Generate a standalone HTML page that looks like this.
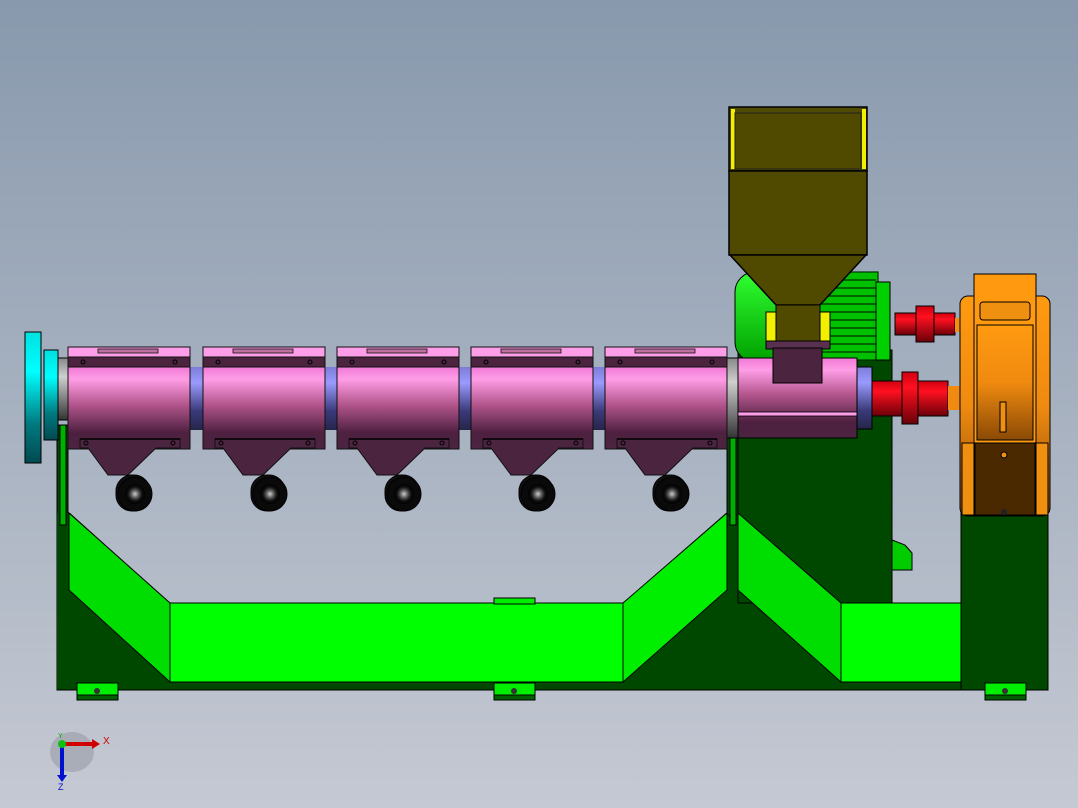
<!DOCTYPE html>
<html><head><meta charset="utf-8"><style>
html,body{margin:0;padding:0;width:1078px;height:808px;overflow:hidden}
svg{display:block}
</style></head><body>
<svg width="1078" height="808" viewBox="0 0 1078 808" xmlns="http://www.w3.org/2000/svg">
<defs>
<linearGradient id="bg" gradientUnits="userSpaceOnUse" x1="0" y1="0" x2="0" y2="808"><stop offset="0" stop-color="#8899ad"/><stop offset="1" stop-color="#c5c9d3"/></linearGradient>
<linearGradient id="pink" x1="0" y1="0" x2="0" y2="1"><stop offset="0" stop-color="#f07ad6"/><stop offset="0.15" stop-color="#ff9de6"/><stop offset="0.45" stop-color="#b5578f"/><stop offset="0.8" stop-color="#4e2040"/><stop offset="1" stop-color="#4b2440"/></linearGradient>
<linearGradient id="blue" x1="0" y1="0" x2="0" y2="1"><stop offset="0" stop-color="#7d7dd8"/><stop offset="0.25" stop-color="#9a9aff"/><stop offset="0.7" stop-color="#3a3a7a"/><stop offset="1" stop-color="#25254a"/></linearGradient>
<linearGradient id="cyan" x1="0" y1="0" x2="0" y2="1"><stop offset="0" stop-color="#00e0e0"/><stop offset="0.3" stop-color="#00ffff"/><stop offset="0.7" stop-color="#007a80"/><stop offset="1" stop-color="#004a50"/></linearGradient>
<linearGradient id="gray" x1="0" y1="0" x2="0" y2="1"><stop offset="0" stop-color="#888"/><stop offset="0.3" stop-color="#cfcfcf"/><stop offset="1" stop-color="#333"/></linearGradient>
<linearGradient id="red" x1="0" y1="0" x2="0" y2="1"><stop offset="0" stop-color="#d00010"/><stop offset="0.3" stop-color="#ff1020"/><stop offset="1" stop-color="#6a0008"/></linearGradient>
<linearGradient id="orange" x1="0" y1="0" x2="0" y2="1"><stop offset="0" stop-color="#ff9a10"/><stop offset="0.5" stop-color="#f08a10"/><stop offset="1" stop-color="#8a4a05"/></linearGradient>
<linearGradient id="mgreen" x1="0" y1="0" x2="0" y2="1"><stop offset="0" stop-color="#30ff30"/><stop offset="1" stop-color="#00a000"/></linearGradient>
<radialGradient id="fan" cx="0.5" cy="0.5" r="0.5"><stop offset="0" stop-color="#ccc"/><stop offset="0.4" stop-color="#555"/><stop offset="0.7" stop-color="#111"/><stop offset="1" stop-color="#000"/></radialGradient>
<g id="band">
 <rect x="0" y="0" width="122" height="10" fill="#ff9ee8" stroke="#111"/>
 <rect x="30" y="2" width="60" height="4" fill="#c070a0" stroke="#111" stroke-width="0.8"/>
 <rect x="0" y="10" width="122" height="10" fill="#4c2440" stroke="#111"/>
 <circle cx="15" cy="15" r="2" fill="none" stroke="#000"/><circle cx="107" cy="15" r="2" fill="none" stroke="#000"/>
 <rect x="0" y="20" width="122" height="82" fill="url(#pink)" stroke="#111"/>
 <polygon points="12,92 112,92 112,101 88,101 60,128 40,128 20,101 12,101" fill="#4b2440" stroke="#111"/>
 <line x1="12" y1="92" x2="112" y2="92" stroke="#000" stroke-width="1.5"/>
 <circle cx="18" cy="96" r="2" fill="none" stroke="#000"/><circle cx="105" cy="96" r="2" fill="none" stroke="#000"/>
 <rect x="48" y="128" width="34" height="36" rx="16" fill="#111" stroke="#000"/>
 <circle cx="67" cy="147" r="17" fill="#0a0a0a" stroke="#000"/>
 <circle cx="67" cy="147" r="10" fill="url(#fan)"/>
</g>
<g id="foot"><rect x="0" y="0" width="41" height="17" fill="#00ee00" stroke="#000"/><rect x="0" y="12" width="41" height="5" fill="#006000" stroke="#000"/><circle cx="20" cy="8" r="3" fill="#333"/></g>
</defs>
<rect width="1078" height="808" fill="url(#bg)"/>

<!-- frame -->
<rect x="57" y="425" width="11" height="265" fill="#004800" stroke="#000"/>
<rect x="57" y="513" width="991" height="177" fill="#004800"/>
<polygon points="69,512 170,603 623,603 727,512" fill="url(#bg)"/>
<rect x="892" y="512" width="69" height="91" fill="url(#bg)"/>
<rect x="738" y="350" width="154" height="253" fill="#004800" stroke="#000"/>
<rect x="727" y="425" width="11" height="90" fill="#004800" stroke="#000"/>
<rect x="60" y="425" width="6" height="100" fill="#00b000" stroke="#000"/>
<rect x="730" y="425" width="6" height="100" fill="#00b000" stroke="#000"/>
<polygon points="69,513 170,603 170,682 69,590" fill="#00dd00" stroke="#000"/>
<rect x="170" y="603" width="453" height="79" fill="#00ff00" stroke="#000"/>
<polygon points="623,603 727,513 727,590 623,682" fill="#00ee00" stroke="#000"/>
<polygon points="738,513 841,603 841,682 738,590" fill="#00dd00" stroke="#000"/>
<rect x="841" y="603" width="120" height="79" fill="#00ff00" stroke="#000"/>
<rect x="961" y="513" width="87" height="177" fill="#004800" stroke="#000"/>
<line x1="57" y1="690" x2="1048" y2="690" stroke="#000"/>
<rect x="494" y="598" width="41" height="6" fill="#00ee00" stroke="#000"/>
<polygon points="892,540 905,545 912,553 912,570 892,570" fill="#00cc00" stroke="#000"/>
<use href="#foot" x="77" y="683"/><use href="#foot" x="494" y="683"/><use href="#foot" x="985" y="683"/>

<!-- motor -->
<rect x="735" y="272" width="60" height="90" rx="20" fill="url(#mgreen)" stroke="#000"/>
<g stroke="#003000" stroke-width="1.2">
<rect x="800" y="272" width="78" height="88" fill="#00c000"/>
<line x1="812" y1="280" x2="876" y2="280"/><line x1="812" y1="288" x2="876" y2="288"/><line x1="812" y1="296" x2="876" y2="296"/><line x1="812" y1="304" x2="876" y2="304"/><line x1="812" y1="312" x2="876" y2="312"/><line x1="812" y1="320" x2="876" y2="320"/><line x1="812" y1="328" x2="876" y2="328"/><line x1="812" y1="336" x2="876" y2="336"/><line x1="812" y1="344" x2="876" y2="344"/><line x1="812" y1="352" x2="876" y2="352"/>
</g>
<rect x="876" y="282" width="14" height="78" fill="#00d000" stroke="#000"/>

<!-- hopper -->
<rect x="729" y="107" width="138" height="64" fill="#4f4a00" stroke="#000" stroke-width="1.5"/>
<rect x="731" y="109" width="4" height="60" fill="#f0f000"/><rect x="862" y="109" width="4" height="60" fill="#f0f000"/>
<rect x="735" y="113" width="126" height="56" fill="none" stroke="#222"/>
<rect x="729" y="171" width="138" height="84" fill="#4f4a00" stroke="#000" stroke-width="1.5"/>
<polygon points="730,255 866,255 820,305 776,305" fill="#4f4a00" stroke="#000" stroke-width="1.5"/>
<rect x="766" y="312" width="64" height="34" fill="#f0f000" stroke="#000"/>
<rect x="776" y="305" width="44" height="36" fill="#4f4a00" stroke="#000"/>
<rect x="766" y="341" width="64" height="8" fill="#5a3050" stroke="#000"/>

<!-- left end -->
<rect x="25" y="332" width="16" height="131" fill="url(#cyan)" stroke="#000"/>
<rect x="44" y="350" width="14" height="90" fill="url(#cyan)" stroke="#000"/>
<rect x="58" y="358" width="12" height="62" fill="url(#gray)" stroke="#000"/>

<!-- spacers -->
<rect x="190" y="367" width="13" height="63" fill="url(#blue)"/>
<rect x="324" y="367" width="13" height="63" fill="url(#blue)"/>
<rect x="458" y="367" width="13" height="63" fill="url(#blue)"/>
<rect x="592" y="367" width="13" height="63" fill="url(#blue)"/>
<rect x="726" y="358" width="12" height="80" fill="url(#gray)" stroke="#000"/>

<use href="#band" x="68" y="347"/>
<use href="#band" x="203" y="347"/>
<use href="#band" x="337" y="347"/>
<use href="#band" x="471" y="347"/>
<use href="#band" x="605" y="347"/>

<!-- feed section -->
<rect x="738" y="358" width="119" height="80" fill="url(#pink)" stroke="#000"/>
<rect x="738" y="412" width="119" height="4" fill="#ff9ee8" stroke="#000" stroke-width="0.8"/>
<rect x="773" y="348" width="49" height="35" fill="#4b2440" stroke="#000"/>
<rect x="857" y="367" width="15" height="62" fill="url(#blue)" stroke="#000"/>

<!-- couplings -->
<rect x="895" y="313" width="60" height="22" fill="url(#red)" stroke="#000"/>
<rect x="916" y="306" width="18" height="36" fill="url(#red)" stroke="#000"/>
<rect x="955" y="318" width="8" height="14" fill="#f09010"/>
<rect x="872" y="381" width="76" height="35" fill="url(#red)" stroke="#000"/>
<rect x="902" y="372" width="16" height="52" fill="url(#red)" stroke="#000"/>
<rect x="948" y="386" width="14" height="24" fill="#f08a10"/>

<!-- gearbox -->
<rect x="960" y="296" width="90" height="220" rx="8" fill="url(#orange)" stroke="#000"/>
<rect x="974" y="274" width="62" height="170" fill="#ff9a10" stroke="#000"/>
<rect x="980" y="302" width="50" height="18" rx="3" fill="#f09010" stroke="#000"/>
<rect x="977" y="325" width="56" height="115" fill="url(#orange)" stroke="#000"/>
<rect x="1000" y="402" width="6" height="30" fill="#f09010" stroke="#000"/>
<rect x="975" y="443" width="60" height="72" fill="#4a2800" stroke="#000"/>
<rect x="962" y="443" width="12" height="72" fill="#f09010" stroke="#000"/>
<rect x="1036" y="443" width="12" height="72" fill="#f09010" stroke="#000"/>
<circle cx="1004" cy="455" r="3" fill="#f09010" stroke="#000"/>
<circle cx="1004" cy="512" r="3" fill="#222"/>

<!-- triad -->
<ellipse cx="72" cy="752" rx="22" ry="20" fill="#7a7f8a" opacity="0.35"/>
<line x1="62" y1="744" x2="62" y2="775" stroke="#0010d0" stroke-width="4"/>
<polygon points="57,775 67,775 62,782" fill="#0010d0"/>
<line x1="62" y1="744" x2="92" y2="744" stroke="#d00000" stroke-width="4"/>
<polygon points="92,739 92,749 100,744" fill="#d00000"/>
<circle cx="62" cy="744" r="4" fill="#10c010"/>
<text x="103" y="744" font-family="Liberation Sans, sans-serif" font-size="10" fill="#d00000">X</text>
<text x="58" y="790" font-family="Liberation Sans, sans-serif" font-size="9" fill="#0010d0">Z</text>
<text x="58" y="738" font-family="Liberation Sans, sans-serif" font-size="7" fill="#10a010">Y</text>
</svg>
</body></html>
